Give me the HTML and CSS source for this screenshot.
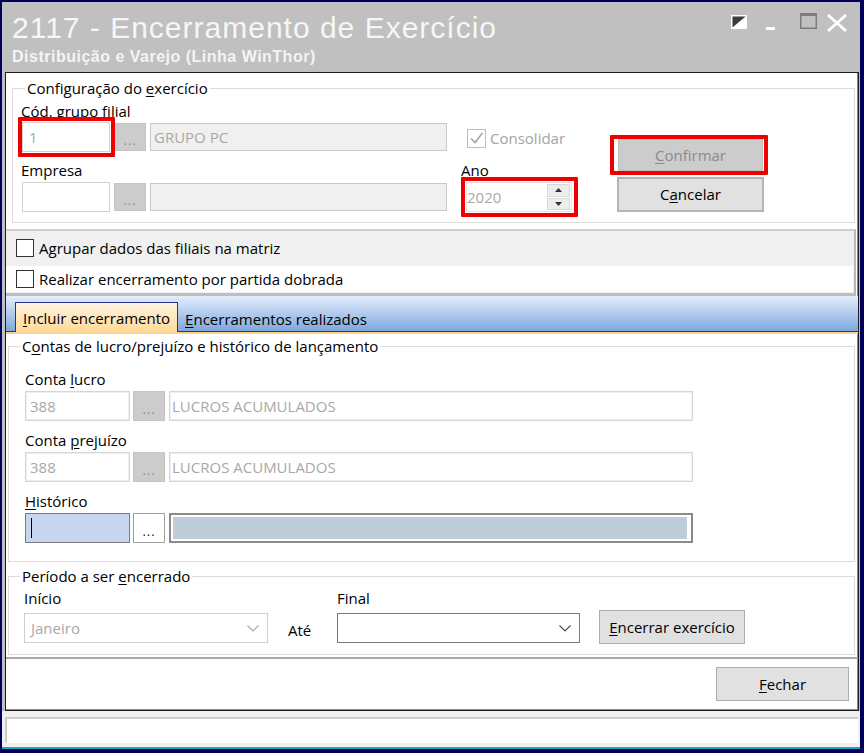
FILE: index.html
```html
<!DOCTYPE html>
<html lang="pt-BR">
<head>
    <meta charset="UTF-8">
    <title>2117 - Encerramento de Exercício</title>
    <link rel="stylesheet" href="styles.css">
</head>
<body>
    <div class="window">
        <header class="titlebar">
            <div class="title-text">
                <h1>2117 - Encerramento de Exercício</h1>
                <div class="subtitle">Distribuição e Varejo (Linha WinThor)</div>
            </div>
            <svg class="win-buttons" width="120" height="22" viewBox="0 0 120 22">
                <rect x="1" y="3" width="16" height="14" fill="#ffffff"/>
                <polygon points="2.5,4.5 15.5,4.5 2.5,15.5" fill="#3c3c3c"/>
                <rect x="36" y="15" width="9" height="3" fill="#ffffff"/>
                <rect x="70.75" y="1.75" width="15.5" height="14.5" fill="none" stroke="#7c7c7c" stroke-width="1.5"/>
                <rect x="70" y="1" width="17" height="3" fill="#7c7c7c"/>
                <path d="M98 3 L116 19 M116 3 L98 19" stroke="#ffffff" stroke-width="2.8"/>
            </svg>
        </header>

        <div class="client">
            <fieldset class="group config">
                <legend>Configuração do <u>e</u>xercício</legend>
                <div class="config-cols">
                    <div class="col-a">
                        <div class="label">Cód. grupo filial</div>
                        <div class="row first">
                            <div class="code-wrap">
                                <div class="field code disabled">1</div>
                                <div class="mark mark-code"></div>
                            </div>
                            <div class="dots disabled">...</div>
                            <div class="field desc grey">GRUPO PC</div>
                        </div>
                        <div class="label second">Empresa</div>
                        <div class="row">
                            <div class="field code"></div>
                            <div class="dots disabled">...</div>
                            <div class="field desc grey"></div>
                        </div>
                    </div>

                    <div class="col-b">
                        <div class="consolidar">
                            <svg width="19" height="19" viewBox="0 0 19 19">
                                <rect x="0.5" y="0.5" width="18" height="18" fill="#fff" stroke="#bdbdbd"/>
                                <polyline points="4,9.5 8,13.5 15.5,4" fill="none" stroke="#a6a6a6" stroke-width="1.6"/>
                            </svg>
                            <span>Consolidar</span>
                        </div>
                        <div class="label ano-label">Ano</div>
                        <div class="spin-wrap">
                            <div class="spin">
                                <div class="spin-val">2020</div>
                                <div class="spin-btns">
                                    <div class="sb"><svg width="7" height="4" viewBox="0 0 7 4"><polygon points="0,4 7,4 3.5,0" fill="#333"/></svg></div>
                                    <div class="sb"><svg width="7" height="4" viewBox="0 0 7 4"><polygon points="0,0 7,0 3.5,4" fill="#333"/></svg></div>
                                </div>
                            </div>
                            <div class="mark mark-ano"></div>
                        </div>
                    </div>

                    <div class="col-c">
                        <div class="confirm-wrap">
                            <div class="btn btn-confirm"><u>C</u>onfirmar</div>
                            <div class="mark mark-confirm"></div>
                        </div>
                        <div class="btn btn-cancel">C<u>a</u>ncelar</div>
                    </div>
                </div>
            </fieldset>

            <div class="options">
                <div class="opt opt-grey"><span class="box"></span>Agrupar dados das filiais na matriz</div>
                <div class="opt opt-white"><span class="box"></span>Realizar encerramento por partida dobrada</div>
            </div>

            <div class="tabs">
                <div class="tab active"><u>I</u>ncluir encerramento</div>
                <div class="tab"><u>E</u>ncerramentos realizados</div>
            </div>

            <div class="tab-page">
                <fieldset class="group contas">
                    <legend>C<u>o</u>ntas de lucro/prejuízo e histórico de lançamento</legend>
                    <div class="group-body">
                        <div class="label first-label">Conta <u>l</u>ucro</div>
                        <div class="row acc">
                            <div class="field acc-code light">388</div>
                            <div class="dots disabled">...</div>
                            <div class="field acc-desc light">LUCROS ACUMULADOS</div>
                        </div>

                        <div class="label next-label">Conta <u>p</u>rejuízo</div>
                        <div class="row acc">
                            <div class="field acc-code light">388</div>
                            <div class="dots disabled">...</div>
                            <div class="field acc-desc light">LUCROS ACUMULADOS</div>
                        </div>

                        <div class="label next-label"><u>H</u>istórico</div>
                        <div class="row acc">
                            <div class="field acc-code focus"><span class="caret"></span></div>
                            <div class="dots active">...</div>
                            <div class="field acc-desc hist"><div class="hist-fill"></div></div>
                        </div>
                    </div>
                </fieldset>

                <fieldset class="group periodo">
                    <legend>Período a ser <u>e</u>ncerrado</legend>
                    <div class="period-row">
                        <div class="period-col">
                            <div class="label">Início</div>
                            <div class="select disabled-select">
                                <span>Janeiro</span>
                                <svg width="12" height="7" viewBox="0 0 12 7"><polyline points="0.5,0.5 6,6 11.5,0.5" fill="none" stroke="#a8a8a8" stroke-width="1.2"/></svg>
                            </div>
                        </div>
                        <div class="ate">Até</div>
                        <div class="period-col">
                            <div class="label">Final</div>
                            <div class="select final-select">
                                <span></span>
                                <svg width="12" height="7" viewBox="0 0 12 7"><polyline points="0.5,0.5 6,6 11.5,0.5" fill="none" stroke="#505050" stroke-width="1.2"/></svg>
                            </div>
                        </div>
                        <div class="btn btn-encerrar"><u>E</u>ncerrar exercício</div>
                    </div>
                </fieldset>
            </div>

            <div class="footer">
                <div class="btn btn-fechar"><u>F</u>echar</div>
            </div>
        </div>

        <div class="status-area">
            <div class="statusbar"></div>
        </div>
    </div>
</body>
</html>
```

FILE: styles.css
```css
body {
    margin: 0;
    background: #00005a;
    font-family: "Open Sans", "Noto Sans", sans-serif;
    font-size: 15px;
    color: #000;
}

u {
    text-decoration: underline;
    text-underline-offset: 2px;
}

.window {
    width: 858px;
    height: 747px;
    margin: 2px 0 0 2px;
    background: #c0c0c0;
    display: flex;
    flex-direction: column;
}

/* title bar */
.titlebar {
    height: 70px;
    box-sizing: border-box;
    padding: 9px 0 0 10px;
    display: flex;
    justify-content: space-between;
}

.titlebar h1 {
    margin: 0;
    font-family: "Liberation Sans", Arial, sans-serif;
    font-weight: normal;
    font-size: 30px;
    line-height: 34px;
    letter-spacing: 1px;
    color: #f6f6f6;
}

.subtitle {
    margin-top: 3px;
    font-family: "Liberation Sans", Arial, sans-serif;
    font-weight: bold;
    font-size: 16px;
    line-height: 18px;
    letter-spacing: 0.5px;
    color: #f4f4f4;
}

.win-buttons {
    margin: 1px 10px 0 0;
}

/* client area */
.client {
    height: 639px;
    box-sizing: border-box;
    margin: 0 1px 0 3px;
    border: 1px solid #1c1c1c;
    box-shadow: inset -1px -1px 0 #8a8a8a;
    background: #fff;
    display: flex;
    flex-direction: column;
}

.group {
    border: 1px solid #dcdcdc;
    margin: 0;
    padding: 0;
    min-width: 0;
}

.group legend {
    padding: 0 2px;
    line-height: 16px;
}

.label {
    line-height: 17px;
    height: 17px;
    white-space: nowrap;
}

.row {
    display: flex;
    align-items: center;
}

.field {
    box-sizing: border-box;
    background: #fff;
    white-space: nowrap;
    overflow: hidden;
}

.dots {
    box-sizing: border-box;
    width: 32px;
    height: 28px;
    text-align: center;
    font-size: 13px;
    line-height: 28px;
    padding-top: 2px;
    letter-spacing: 1px;
}

.dots.disabled {
    background: #cccccc;
    border: 1px solid #c4c4c4;
    color: #8c8c8c;
}

.dots.active {
    background: #fff;
    border: 1px solid #a0a0a0;
    color: #222;
}

/* red highlight frames */
.code-wrap,
.spin-wrap,
.confirm-wrap {
    position: relative;
}

.mark {
    position: absolute;
    border: 4px solid #ee0000;
    border-radius: 1px;
}

.mark-code {
    inset: -5px -5px -5px -3px;
}

.mark-ano {
    inset: -5px -6px -5px -5px;
}

.mark-confirm {
    inset: -4px;
}

/* configuration group */
.config {
    margin: 7px 3px 0 6px;
    padding: 7px 0 10px 0;
}

.config legend {
    margin-left: 12px;
}

.config-cols {
    display: flex;
    padding-left: 8px;
}

.col-a {
    width: 426px;
}

.col-a .row {
    margin-top: 3px;
}

.col-a .row.first {
    margin-top: 2px;
}

.col-a .label.second {
    margin-top: 10px;
}

.field.code {
    width: 88px;
    height: 30px;
    margin-left: 1px;
    border: 1px solid #d2d2d2;
    color: #a8a8a8;
    padding-left: 6px;
    line-height: 28px;
}

.code-wrap + .dots,
.field.code + .dots {
    margin-left: 4px;
}

.field.desc {
    width: 297px;
    height: 28px;
    margin-left: 4px;
    padding-left: 3px;
    line-height: 26px;
}

.field.grey {
    background: #f0f0f0;
    border: 1px solid #c8c8c8;
    color: #a8a8a8;
}

.col-b {
    width: 153px;
    margin-left: 14px;
}

.consolidar {
    margin-top: 25px;
    margin-left: 6px;
    height: 20px;
    display: flex;
    align-items: center;
    color: #a4a4a4;
}

.consolidar span {
    margin-left: 4px;
}

.ano-label {
    margin-top: 14px;
}

.spin-wrap {
    margin-top: 3px;
    margin-left: 5px;
    width: 106px;
}

.spin {
    box-sizing: border-box;
    height: 30px;
    border: 1px solid #e4e4e4;
    display: flex;
    background: #fff;
}

.spin-val {
    flex: 1;
    color: #a8a8a8;
    line-height: 28px;
}

.spin-btns {
    width: 23px;
    padding: 1px 1px 1px 0;
    display: flex;
    flex-direction: column;
    gap: 1px;
}

.sb {
    flex: 1;
    background: #ededed;
    border: 1px solid #d8d8d8;
    display: flex;
    align-items: center;
    justify-content: center;
}

.btn {
    box-sizing: border-box;
    background: #e1e1e1;
    border: 1px solid #adadad;
    text-align: center;
    white-space: nowrap;
}

.btn-confirm {
    margin-top: 36px;
    margin-left: 4px;
    width: 145px;
    height: 32px;
    line-height: 30px;
    background: #cccccc;
    border-color: #bfbfbf;
    color: #8a8a8a;
}

.btn-cancel {
    margin-top: 6px;
    margin-left: 3px;
    width: 147px;
    height: 35px;
    border: 2px solid #b4b4b4;
    line-height: 31px;
}

/* option checkboxes */
.options {
    margin: 6px 2px 0 0;
    border-top: 2px solid #d0d0d0;
    border-right: 2px solid #b8b8b8;
    border-bottom: 3px solid #bdbdbd;
}

.opt {
    display: flex;
    align-items: center;
    padding-left: 10px;
}

.opt-grey {
    height: 34px;
    background: #f0f0f0;
}

.opt-white {
    height: 28px;
    box-sizing: border-box;
    border: 1px solid #f0f0f0;
    border-left: 0;
}

.box {
    box-sizing: border-box;
    width: 18px;
    height: 18px;
    border: 1px solid #333;
    background: #fff;
    margin-right: 5px;
}

/* tab strip */
.tabs {
    height: 35px;
    border-bottom: 1px solid #27338a;
    background: linear-gradient(#e4eefc, #7ea7dd);
    display: flex;
    align-items: flex-end;
    padding-left: 9px;
}

.tab {
    height: 26px;
    line-height: 26px;
    padding: 3px 7px 0 7px;
    margin-bottom: -1px;
    white-space: nowrap;
}

.tab.active {
    border: 1px solid #27338a;
    border-bottom: 0;
    background: linear-gradient(#fff4e2, #ffd996);
    height: 27px;
    padding-top: 2px;
}

.tab-page {
    border-top: 2px solid #fdd08c;
    border-bottom: 2px solid #a9a9a9;
    padding-bottom: 2px;
}

.contas {
    margin: 4px 3px 0 2px;
    padding: 0 0 18px 0;
}

.contas legend,
.periodo legend {
    margin-left: 11px;
}

.group-body {
    padding-left: 16px;
}

.first-label {
    margin-top: 17px;
}

.next-label {
    margin-top: 11px;
}

.row.acc {
    margin-top: 3px;
    height: 30px;
}

.field.acc-code {
    width: 105px;
    height: 30px;
    padding-left: 4px;
    line-height: 28px;
}

.row.acc .dots {
    margin-left: 3px;
    height: 30px;
    line-height: 30px;
}

.field.acc-desc {
    width: 524px;
    height: 30px;
    margin-left: 4px;
    padding-left: 2px;
    line-height: 28px;
}

.field.light {
    border: 1px solid #d6d6d6;
    box-shadow: inset 0 0 0 1px #efefef;
    color: #a8a8a8;
}

.field.focus {
    background: #c8d7f0;
    border: 1px solid #7c7c7c;
}

.caret {
    display: block;
    width: 1px;
    height: 20px;
    margin: 4px 0 0 1px;
    background: #000;
}

.field.hist {
    border: 2px solid #8a8a8a;
    padding: 2px;
}

.hist-fill {
    height: 100%;
    background: #bfcddb;
    margin-right: 2px;
}

.periodo {
    margin: 6px 3px 0 2px;
    padding: 0 0 11px 0;
}

.period-row {
    display: flex;
    align-items: flex-end;
    padding-left: 15px;
}

.period-col .label {
    margin-top: 6px;
}

.select {
    box-sizing: border-box;
    margin-top: 6px;
    height: 30px;
    display: flex;
    align-items: center;
    justify-content: space-between;
    padding: 0 8px 0 6px;
}

.disabled-select {
    width: 244px;
    border: 1px solid #cfcfcf;
    color: #a8a8a8;
}

.final-select {
    width: 243px;
    border: 1px solid #7a7a7a;
}

.ate {
    width: 49px;
    margin-left: 20px;
    line-height: 17px;
    margin-bottom: 4px;
}

.btn-encerrar {
    width: 146px;
    height: 34px;
    line-height: 32px;
    margin-left: 19px;
    margin-bottom: -1px;
}

.footer {
    flex: 1;
    display: flex;
    justify-content: flex-end;
    padding: 8px 9px 0 0;
}

.btn-fechar {
    width: 133px;
    height: 34px;
    line-height: 32px;
}

/* status bar */
.status-area {
    height: 38px;
    box-sizing: border-box;
    background: #f0f0f0;
    border-bottom: 2px solid #1ca6c8;
    padding-top: 6px;
}

.statusbar {
    height: 26px;
    box-sizing: border-box;
    margin: 0 2px 0 3px;
    background: #fff;
    border-top: 2px solid #cdcdcd;
    border-left: 2px solid #cdcdcd;
}
```
